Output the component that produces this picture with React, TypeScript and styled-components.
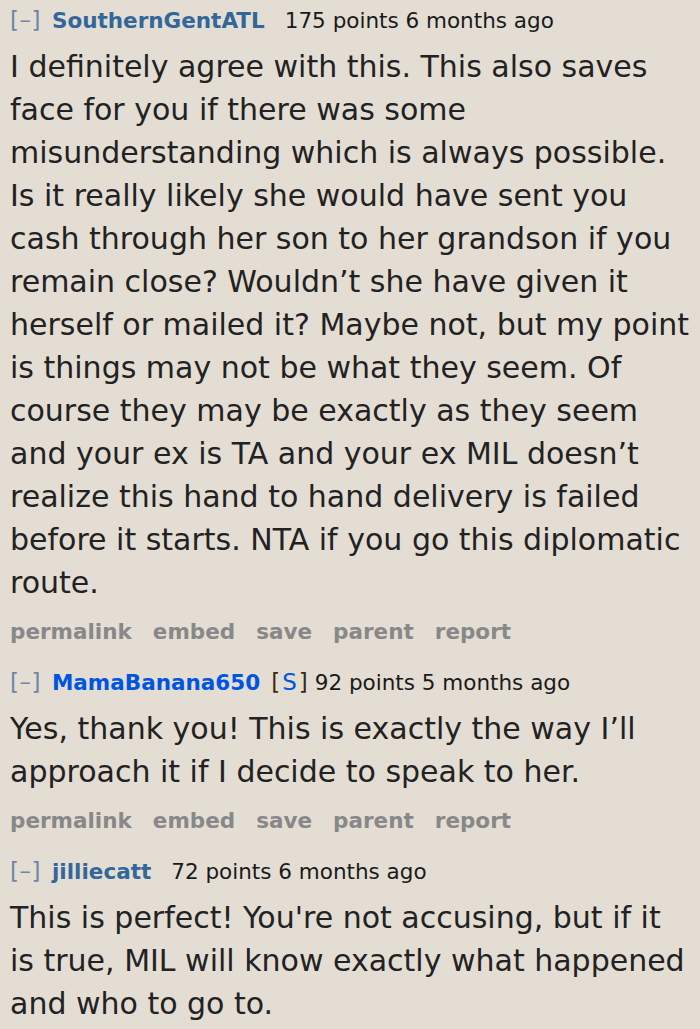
import styled, { createGlobalStyle } from "styled-components";

const GlobalStyle = createGlobalStyle`
  html, body {
    margin: 0;
    padding: 0;
    background: #e3ddd4;
  }
  body {
    font-family: "DejaVu Sans", Verdana, sans-serif;
  }
`;

type CommentData = {
  author: string;
  submitter?: boolean;
  points: number;
  age: string;
  lines: string[];
};

const comments: CommentData[] = [
  {
    author: "SouthernGentATL",
    points: 175,
    age: "6 months ago",
    lines: [
      "I definitely agree with this. This also saves",
      "face for you if there was some",
      "misunderstanding which is always possible.",
      "Is it really likely she would have sent you",
      "cash through her son to her grandson if you",
      "remain close? Wouldn\u2019t she have given it",
      "herself or mailed it? Maybe not, but my point",
      "is things may not be what they seem. Of",
      "course they may be exactly as they seem",
      "and your ex is TA and your ex MIL doesn\u2019t",
      "realize this hand to hand delivery is failed",
      "before it starts. NTA if you go this diplomatic",
      "route.",
    ],
  },
  {
    author: "MamaBanana650",
    submitter: true,
    points: 92,
    age: "5 months ago",
    lines: [
      "Yes, thank you! This is exactly the way I\u2019ll",
      "approach it if I decide to speak to her.",
    ],
  },
  {
    author: "jilliecatt",
    points: 72,
    age: "6 months ago",
    lines: [
      "This is perfect! You're not accusing, but if it",
      "is true, MIL will know exactly what happened",
      "and who to go to.",
    ],
  },
];

const buttons = ["permalink", "embed", "save", "parent", "report"];

const App = () => {
  return (
    <>
      <GlobalStyle />
      <Page>
        {comments.map((c, i) => (
          <Comment key={c.author} $last={i === comments.length - 1}>
            <Tagline>
              <Expand>[–]</Expand>
              <Author $submitter={c.submitter}>{c.author}</Author>
              {c.submitter && (
                <Flair>
                  [<span>S</span>]
                </Flair>
              )}
              <Score>
                {c.points} points {c.age}
              </Score>
            </Tagline>
            <Body>
              {c.lines.map((l, j) => (
                <Line key={j}>{l}</Line>
              ))}
            </Body>
            {i < comments.length - 1 && (
              <Buttons>
                {buttons.map((b) => (
                  <Button key={b}>{b}</Button>
                ))}
              </Buttons>
            )}
          </Comment>
        ))}
      </Page>
    </>
  );
};

const Page = styled.div`
  padding: 5px 0 0 10px;
  color: #222;
`;

const Comment = styled.div<{ $last?: boolean }>`
  margin-bottom: ${(p) => (p.$last ? 0 : 21)}px;
`;

const Tagline = styled.div`
  display: flex;
  align-items: center;
  height: 30px;
  font-size: 21.5px;
  white-space: nowrap;
`;

const Expand = styled.span`
  color: #6f86a6;
  margin-right: 11px;
  font-size: 23px;
  letter-spacing: 0.5px;
`;

const Author = styled.span<{ $submitter?: boolean }>`
  font-weight: bold;
  color: ${(p) => (p.$submitter ? "#0055df" : "#369")};
  margin-right: ${(p) => (p.$submitter ? 11 : 20)}px;
`;

const Flair = styled.span`
  color: #3b2a12;
  font-size: 23px;
  letter-spacing: 2px;
  margin-right: 5px;
  span {
    color: #0055df;
  }
`;

const Score = styled.span`
  color: #1a1a1a;
`;

const Body = styled.div`
  margin-top: 10px;
  font-size: 30px;
  line-height: 43px;
  color: #222;
`;

const Line = styled.div`
  white-space: nowrap;
`;

const Buttons = styled.div`
  display: flex;
  gap: 21px;
  height: 30px;
  align-items: center;
  margin-top: 12px;
`;

const Button = styled.span`
  font-size: 21.5px;
  font-weight: bold;
  color: #888;
`;

export default App;
